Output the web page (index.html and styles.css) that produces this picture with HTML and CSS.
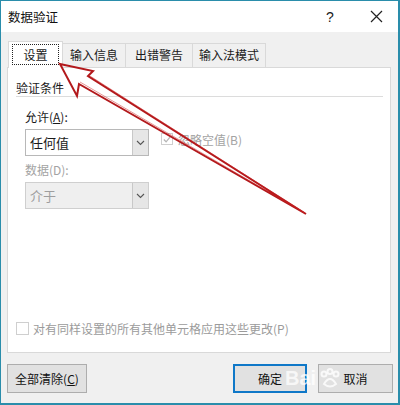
FILE: index.html
```html
<!DOCTYPE html>
<html lang="zh-CN">
<head>
<meta charset="utf-8">
<title>数据验证</title>
<link rel="stylesheet" href="styles.css">
</head>
<body>
<div class="window">
  <div class="titlebar">
    <span class="title">数据验证</span>
    <span class="tb-help">?</span>
    <span class="tb-close">
      <svg width="13" height="13" viewBox="0 0 13 13"><path d="M1 1 L12 12 M12 1 L1 12" stroke="#222" stroke-width="1.2" fill="none"/></svg>
    </span>
  </div>
  <div class="body">
    <div class="tabs">
      <div class="tab active"><span class="focus">设置</span></div>
      <div class="tab t2">输入信息</div>
      <div class="tab t3">出错警告</div>
      <div class="tab t4">输入法模式</div>
    </div>
    <div class="panel">
      <div class="group-head">验证条件</div>
      <div class="fields">
        <div class="label">允许(<u>A</u>):</div>
        <div class="row">
          <div class="combo">
            <span class="combo-text">任何值</span>
            <span class="combo-btn"><svg width="9" height="6" viewBox="0 0 9 6"><path d="M1 1 L4.5 4.5 L8 1" stroke="#555" stroke-width="1.1" fill="none"/></svg></span>
          </div>
          <div class="check disabled">
            <span class="box checked"><svg width="11" height="11" viewBox="0 0 11 11"><path d="M2 5.5 L4.5 8 L9 2.5" stroke="#b5b5b5" stroke-width="1.3" fill="none"/></svg></span>
            <span>忽略空值(B)</span>
          </div>
        </div>
        <div class="label disabled-text">数据(D):</div>
        <div class="combo combo-disabled">
          <span class="combo-text">介于</span>
          <span class="combo-btn"><svg width="9" height="6" viewBox="0 0 9 6"><path d="M1 1 L4.5 4.5 L8 1" stroke="#555" stroke-width="1.1" fill="none"/></svg></span>
        </div>
      </div>
      <div class="spacer"></div>
      <div class="check apply">
        <span class="box"></span>
        <span>对有同样设置的所有其他单元格应用这些更改(P)</span>
      </div>
    </div>
    <div class="footer">
      <button class="btn wide">全部清除(<u>C</u>)</button>
      <div class="grow"></div>
      <button class="btn default">确定</button>
      <button class="btn">取消</button>
    </div>
  </div>
  <svg class="arrow" width="400" height="405" viewBox="0 0 400 405">
    <path d="M60 64 L93 71 L88 76 L306 214 L79 84 L77 96 Z" fill="none" stroke="#b3191c" stroke-width="2" stroke-linejoin="miter"/>
    <path d="M90 76 L305 213 M80 82 L305 213" fill="none" stroke="#c22" stroke-width="0.8" opacity="0.6"/>
  </svg>
  <div class="watermark">
    <span class="wm-bai">Bai</span>
    <svg width="22" height="22" viewBox="0 0 22 22">
      <g fill="none" stroke="rgba(255,255,255,0.8)" stroke-width="2">
        <circle cx="5" cy="6" r="2.5"/><circle cx="11" cy="3.5" r="2.5"/><circle cx="17" cy="6" r="2.5"/>
        <path d="M5 16 Q11 6 17 16 Q11 21 5 16 Z"/>
      </g>
    </svg>
  </div>
</div>
</body>
</html>
```

FILE: styles.css
```css
* { box-sizing: border-box; }
html, body { margin: 0; padding: 0; }
body {
  width: 400px;
  height: 405px;
  background: #fff;
  font-family: "Noto Sans CJK SC", "Noto Sans", sans-serif;
  font-size: 12px;
  color: #1a1a1a;
}
.window {
  position: relative;
  width: 400px;
  height: 405px;
  border: 1px solid #2a8dab;
  border-right-width: 2px;
  border-bottom-width: 2px;
  display: flex;
  flex-direction: column;
  background: #f0f0f0;
  overflow: hidden;
}
.titlebar {
  height: 31px;
  background: #fff;
  display: flex;
  align-items: center;
  padding-left: 7px;
  flex-shrink: 0;
}
.title { font-size: 12.5px; flex: 1; color: #111; }
.tb-help { width: 20px; text-align: center; font-size: 14px; margin-right: 26px; font-family: "Liberation Sans", sans-serif; }
.tb-close { width: 20px; margin-right: 12px; display: flex; align-items: center; justify-content: center; }
.body {
  flex: 1;
  display: flex;
  flex-direction: column;
  padding: 9px 6px 0 6px;
}
.tabs {
  display: flex;
  align-items: flex-end;
  height: 26px;
  padding-left: 1px;
  position: relative;
  z-index: 2;
}
.tab {
  height: 24px;
  line-height: 22px;
  padding: 0 7px;
  background: #f0f0f0;
  border: 1px solid #d9d9d9;
  border-bottom: none;
  margin-left: -1px;
  color: #1a1a1a;
}
.tab.t3 { padding: 0 9px; }
.tab.t4 { padding: 0 6px; }
.tab.active {
  height: 27px;
  background: #fff;
  padding: 2px 3px 0 3px;
  margin-left: 0;
  margin-bottom: -1px;
  position: relative;
  z-index: 3;
  width: 55px;
}
.focus {
  display: block;
  border: 1px dotted #222;
  height: 21px;
  line-height: 19px;
  text-align: center;
}
.panel {
  height: 286px;
  margin-right: 1px;
  background: #fff;
  border: 1px solid #d9d9d9;
  display: flex;
  flex-direction: column;
  padding: 0 7px 0 8px;
}
.group-head {
  margin-top: 12px;
  height: 17px;
  line-height: 15px;
  border-bottom: 1px solid #dcdcdc;
  color: #1a1a1a;
}
.fields {
  padding-left: 9px;
  display: flex;
  flex-direction: column;
}
.label { margin-top: 13px; height: 14px; line-height: 14px; }
.disabled-text { color: #a3a3a3; margin-top: 7px; }
.row { display: flex; align-items: center; }
.combo {
  margin-top: 5px;
  width: 124px;
  height: 27px;
  border: 1px solid #b8b8b8;
  background: #fff;
  display: flex;
  align-items: stretch;
}
.combo-text { flex: 1; padding-left: 4px; line-height: 25px; font-size: 13px; }
.combo-btn {
  width: 16px;
  background: #e6e6e6;
  border-left: 1px solid #c8c8c8;
  display: flex;
  align-items: center;
  justify-content: center;
}
.combo-disabled { background: #efefef; border-color: #cfcfcf; }
.combo-disabled .combo-text { color: #9e9e9e; }
.check { display: flex; align-items: center; gap: 5px; }
.row .check { margin-left: 12px; margin-top: -2px; }
.disabled { color: #a3a3a3; }
.box {
  width: 12px;
  height: 12px;
  border: 1px solid #cfcfcf;
  background: #fff;
  display: flex;
  align-items: center;
  justify-content: center;
}
.spacer { flex: 1; }
.apply { color: #9b9b9b; margin-bottom: 15px; gap: 4px; }
.apply .box { width: 13px; height: 13px; }
.footer {
  display: flex;
  align-items: center;
  height: 50px;
  padding: 0;
  margin-right: -1px;
  gap: 11px;
}
.grow { flex: 1; }
.btn {
  font-family: "Noto Sans CJK SC", "Noto Sans", sans-serif;
  font-size: 12px;
  color: #111;
  height: 29px;
  width: 75px;
  background: #e1e1e1;
  border: 1px solid #adadad;
  padding: 0;
}
.btn.wide { width: 80px; }
.btn.default { width: 74px; border: 2px solid #0f78c8; }
.arrow {
  position: absolute;
  left: -1px;
  top: -1px;
  pointer-events: none;
  z-index: 10;
}
.watermark {
  position: absolute;
  left: 284px;
  top: 366px;
  z-index: 11;
  color: rgba(255, 255, 255, 0.75);
  font-family: "Liberation Sans", sans-serif;
  font-weight: bold;
  font-size: 20px;
  display: flex;
  align-items: center;
  gap: 3px;
  pointer-events: none;
}
```
